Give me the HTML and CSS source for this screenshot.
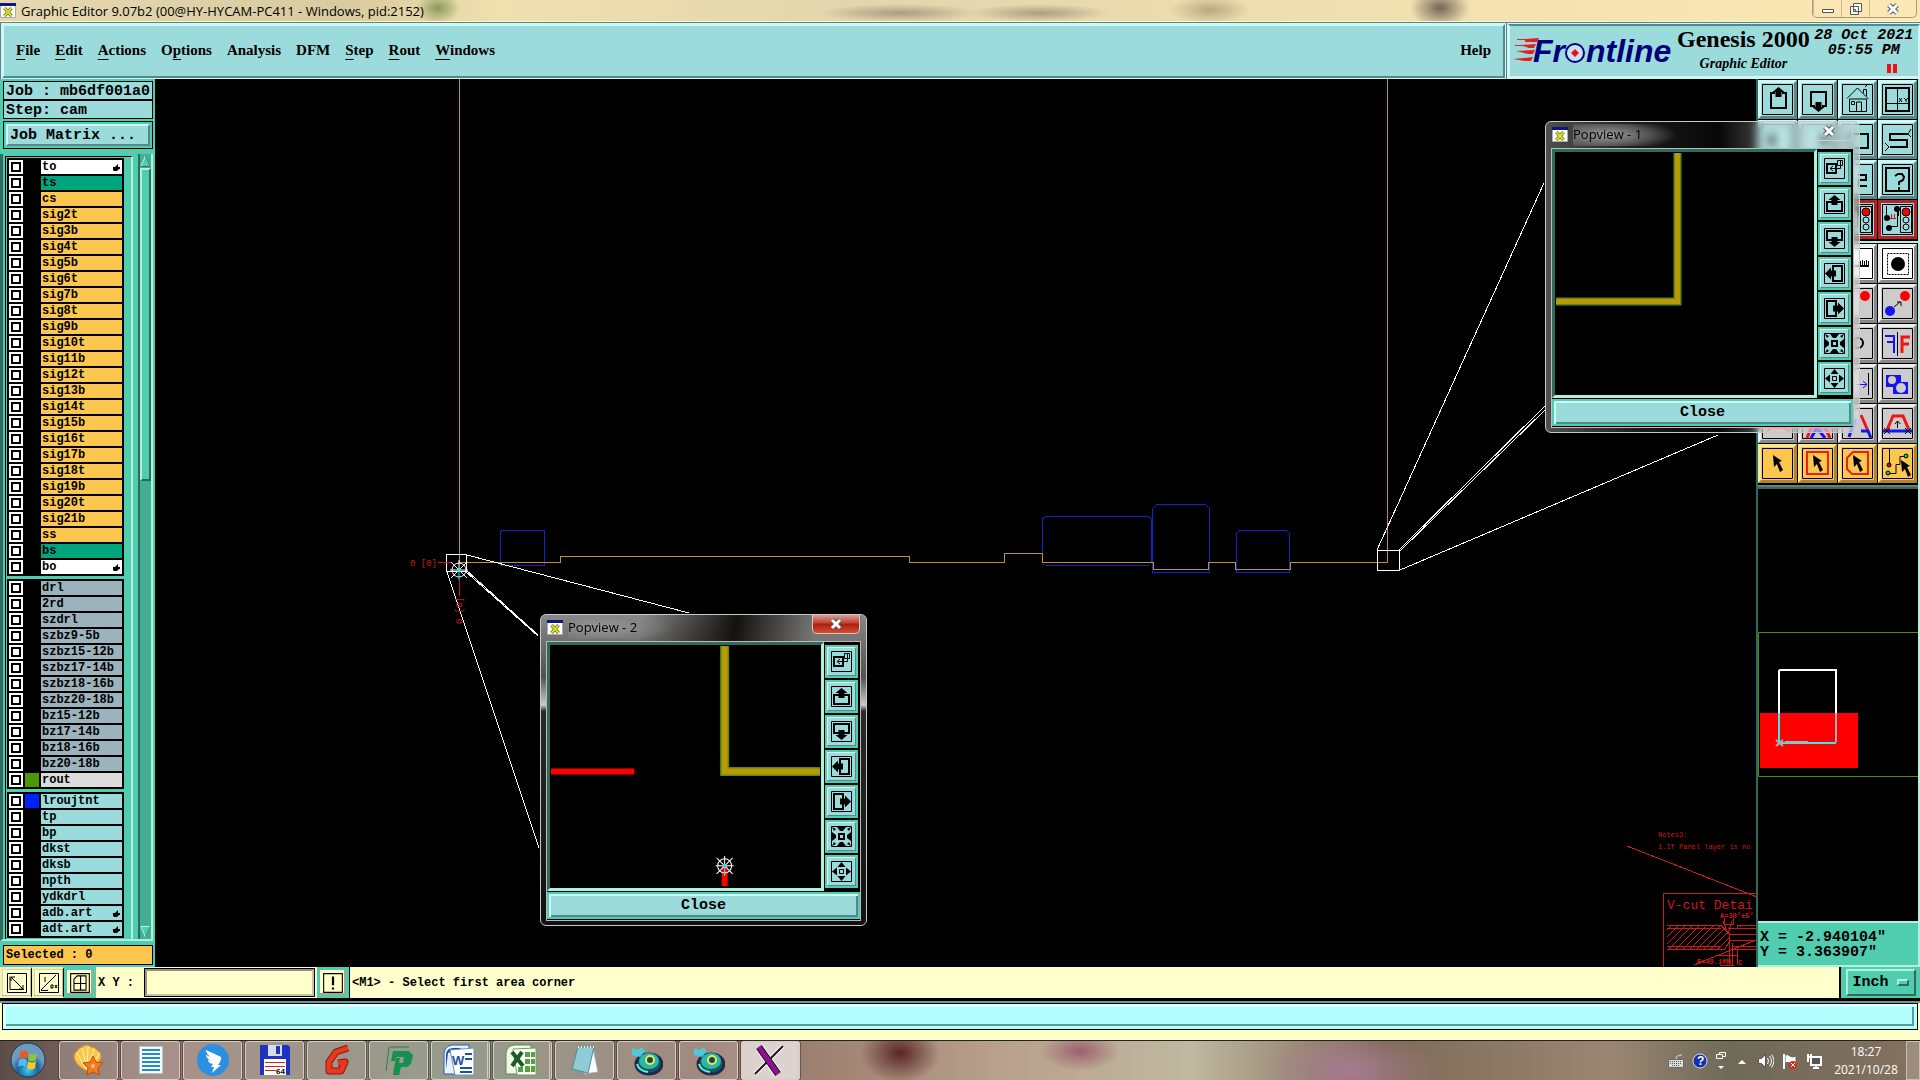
FILE: index.html
```html
<!DOCTYPE html>
<html lang="en">
<head>
<meta charset="utf-8">
<title>Graphic Editor 9.07b2</title>
<link rel="stylesheet" href="styles.css">
</head>
<body>
<svg class="defs" aria-hidden="true">
  <defs>
    <symbol id="xwin" viewBox="0 0 16 16"><path fill="#fff" stroke="#aaa" d="M.5.5h15v14H.5z"/><path fill="#0a1a7a" d="M0 0h16v3H0z"/><path stroke="#3a4a1a" stroke-width="3.400" d="M4.500 5l7 8M11.500 5l-7 8"/><path stroke="#dde02a" stroke-width="2" d="M4.500 5l7 8M11.500 5l-7 8"/></symbol>
    <symbol id="hand" viewBox="0 0 9 9"><path d="M1 4h2l3-3v3h2v2H7L5 8H2L1 7z"/></symbol>
    <symbol id="frame" viewBox="0 0 33 33"><path class="ln" d="M1.500 1.500h30v30h-30z"/></symbol>
    <symbol id="pframe" viewBox="0 0 23 23"><path class="ln" d="M1.500 1.500h20v20h-20z"/></symbol>
    <symbol id="p-pop" viewBox="0 0 23 23"><use href="#pframe"/><path class="ln2" d="M4 7h9v9H4z"/><path class="ln" d="M14.500 3.500h5v5h-5zM17.500 4v7.500h-10M10 9l-3 2.500 3 2.500"/></symbol>
    <symbol id="p-up" viewBox="0 0 23 23"><use href="#pframe"/><path class="ln2" d="M9 10H4v9h15v-9h-5"/><path d="M11.500 3l6 5h-3v5h-6V8h-3z"/></symbol>
    <symbol id="p-down" viewBox="0 0 23 23"><use href="#pframe"/><path class="ln2" d="M9 13H4V4h15v9h-5"/><path d="M11.500 20l6-5h-3v-5h-6v5h-3z"/></symbol>
    <symbol id="p-left" viewBox="0 0 23 23"><use href="#pframe"/><path class="ln2" d="M10 9V4h9v15h-9v-5"/><path d="M2 11.500l6-6v3h5v6H8v3z"/></symbol>
    <symbol id="p-right" viewBox="0 0 23 23"><use href="#pframe"/><path class="ln2" d="M13 9V4H4v15h9v-5"/><path d="M21 11.500l-6-6v3h-5v6h5v3z"/></symbol>
    <symbol id="p-in" viewBox="0 0 23 23"><use href="#pframe"/><path class="ln2" d="M9 9h5v5H9z"/><path d="M7 2h9l-3 4h-3zM7 21h9l-3-4h-3zM2 7v9l4-3v-3zM21 7v9l-4-3v-3zM2 2l4 2-2 2zM21 2l-4 2 2 2zM2 21l4-2-2-2zM21 21l-4-2 2-2z"/></symbol>
    <symbol id="p-out" viewBox="0 0 23 23"><use href="#pframe"/><path class="ln" d="M9.500 9.500h4v4h-4z"/><path d="M11.500 2l4 5h-8zM11.500 21l4-5h-8zM2 11.500l5-4v8zM21 11.500l-5-4v8z"/></symbol>
    <symbol id="traffic" viewBox="0 0 33 33"><use href="#frame"/><path class="ln" d="M17.500 4v9M5.500 3v11M9 23.500h7.500V8"/><circle cx="16" cy="6" r="3"/><circle cx="6" cy="15" r="3"/><circle cx="8" cy="25" r="3"/><path stroke="#e00" fill="none" d="M9 15.500h6M10.500 15v-4M13.500 15v-4"/><path class="ln" d="M19.500 3.500h11v26h-11z"/><circle cx="25" cy="9" r="4" fill="red" stroke="#000"/><circle class="ln" cx="25" cy="17" r="3"/><circle class="ln" cx="25" cy="24" r="3"/></symbol>
    <symbol id="pointer" viewBox="0 0 12 18"><path d="M0 0l9 6-3 1 4 8-3 2-3-8-3 3z"/></symbol>
    <symbol id="star" viewBox="-10 -10 20 20"><g fill="none" stroke="#fff"><circle r="7"/><path d="M-9 0H9M0-10V0M-8-8L8 8M8-8L-8 8"/></g><path stroke="#3ee" d="M0 0v10"/><circle r="2" fill="#3cd8e0"/></symbol>
  </defs>
</svg>

<header class="titlebar">
  <svg class="xwin"><use href="#xwin"/></svg>
  <h1>Graphic Editor 9.07b2 (00@HY-HYCAM-PC411 - Windows, pid:2152)</h1>
  <div class="winctl">
    <button aria-label="Minimize"><svg viewBox="0 0 14 12"><path fill="#fff" stroke="#555" d="M1.500 6.500h11v3h-11z"/></svg></button>
    <button aria-label="Restore"><svg viewBox="0 0 14 12"><path fill="#fff" stroke="#555" d="M4.500.5h8v8h-8zM1.500 3.500h8v8h-8z"/><path fill="none" stroke="#555" d="M4.500 6.500h2v2h-2z"/></svg></button>
    <button class="wide" aria-label="Close"><svg viewBox="0 0 14 12"><path stroke="#555" stroke-width="5" d="M3 2l8 8M11 2l-8 8"/><path stroke="#fff" stroke-width="3" d="M3 2l8 8M11 2l-8 8"/></svg></button>
  </div>
</header>

<div class="head">
  <nav class="menubar">
    <a href="#"><u>F</u>ile</a><a href="#"><u>E</u>dit</a><a href="#"><u>A</u>ctions</a><a href="#">O<u>p</u>tions</a><a href="#">Analysis</a><a href="#">DFM</a><a href="#"><u>S</u>tep</a><a href="#"><u>R</u>out</a><a href="#"><u>W</u>indows</a>
    <a class="help" href="#">Help</a>
  </nav>
  <div class="brand">
    <svg class="logo" viewBox="0 0 164 36">
      <g fill="#e8201c"><path d="M12 6l14-1-2 4H12zM7 12l16-1-2 4h-5zM3 18l19-1-2 4h-5zM0 26l20-2-2 4h-6z"/><path d="M4 6h12v1H4zM2 12h10v1H2z"/></g>
      <text x="20" y="29" class="logo-text">Fr</text><text x="73" y="29" class="logo-text">ntline</text>
      <circle cx="62" cy="20" r="9" fill="#c4e4f4" stroke="#00007c" stroke-width="2"/><path fill="#f01010" d="M62 16l4 4-4 4-4-4z"/>
    </svg>
    <div class="product"><strong>Genesis 2000</strong><em>Graphic Editor</em></div>
    <div class="date"><span>28 Oct 2021</span><span class="time">05:55 PM</span><i class="pause"></i></div>
  </div>
</div>

<main class="main">
  <aside class="sidebar">
    <div class="info"><p>Job : mb6df001a0</p><p>Step: cam</p></div>
    <div class="matrix"><button>Job Matrix ...</button></div>
    <div class="layers">
      <div class="well">
        <div class="group">
          <label><input type="checkbox"><i></i><span class="w">to<svg><use href="#hand"/></svg></span></label>
          <label><input type="checkbox"><i></i><span class="g">ts</span></label>
          <label><input type="checkbox"><i></i><span class="o">cs</span></label>
          <label><input type="checkbox"><i></i><span class="o">sig2t</span></label>
          <label><input type="checkbox"><i></i><span class="o">sig3b</span></label>
          <label><input type="checkbox"><i></i><span class="o">sig4t</span></label>
          <label><input type="checkbox"><i></i><span class="o">sig5b</span></label>
          <label><input type="checkbox"><i></i><span class="o">sig6t</span></label>
          <label><input type="checkbox"><i></i><span class="o">sig7b</span></label>
          <label><input type="checkbox"><i></i><span class="o">sig8t</span></label>
          <label><input type="checkbox"><i></i><span class="o">sig9b</span></label>
          <label><input type="checkbox"><i></i><span class="o">sig10t</span></label>
          <label><input type="checkbox"><i></i><span class="o">sig11b</span></label>
          <label><input type="checkbox"><i></i><span class="o">sig12t</span></label>
          <label><input type="checkbox"><i></i><span class="o">sig13b</span></label>
          <label><input type="checkbox"><i></i><span class="o">sig14t</span></label>
          <label><input type="checkbox"><i></i><span class="o">sig15b</span></label>
          <label><input type="checkbox"><i></i><span class="o">sig16t</span></label>
          <label><input type="checkbox"><i></i><span class="o">sig17b</span></label>
          <label><input type="checkbox"><i></i><span class="o">sig18t</span></label>
          <label><input type="checkbox"><i></i><span class="o">sig19b</span></label>
          <label><input type="checkbox"><i></i><span class="o">sig20t</span></label>
          <label><input type="checkbox"><i></i><span class="o">sig21b</span></label>
          <label><input type="checkbox"><i></i><span class="o">ss</span></label>
          <label><input type="checkbox"><i></i><span class="g">bs</span></label>
          <label><input type="checkbox"><i></i><span class="w">bo<svg><use href="#hand"/></svg></span></label>
        </div>
        <div class="group">
          <label><input type="checkbox"><i></i><span class="d">drl</span></label>
          <label><input type="checkbox"><i></i><span class="d">2rd</span></label>
          <label><input type="checkbox"><i></i><span class="d">szdrl</span></label>
          <label><input type="checkbox"><i></i><span class="d">szbz9-5b</span></label>
          <label><input type="checkbox"><i></i><span class="d">szbz15-12b</span></label>
          <label><input type="checkbox"><i></i><span class="d">szbz17-14b</span></label>
          <label><input type="checkbox"><i></i><span class="d">szbz18-16b</span></label>
          <label><input type="checkbox"><i></i><span class="d">szbz20-18b</span></label>
          <label><input type="checkbox"><i></i><span class="d">bz15-12b</span></label>
          <label><input type="checkbox"><i></i><span class="d">bz17-14b</span></label>
          <label><input type="checkbox"><i></i><span class="d">bz18-16b</span></label>
          <label><input type="checkbox"><i></i><span class="d">bz20-18b</span></label>
          <label><input type="checkbox"><i class="green"></i><span class="r">rout</span></label>
        </div>
        <div class="group">
          <label><input type="checkbox"><i class="blue"></i><span class="c">lroujtnt</span></label>
          <label><input type="checkbox"><i></i><span class="c">tp</span></label>
          <label><input type="checkbox"><i></i><span class="c">bp</span></label>
          <label><input type="checkbox"><i></i><span class="c">dkst</span></label>
          <label><input type="checkbox"><i></i><span class="c">dksb</span></label>
          <label><input type="checkbox"><i></i><span class="c">npth</span></label>
          <label><input type="checkbox"><i></i><span class="c">ydkdrl</span></label>
          <label><input type="checkbox"><i></i><span class="c">adb.art<svg><use href="#hand"/></svg></span></label>
          <label><input type="checkbox"><i></i><span class="c">adt.art<svg><use href="#hand"/></svg></span></label>
        </div>
      </div>
      <div class="scroll">
        <svg class="cap" viewBox="0 0 12 14"><path fill="#50cdae" stroke="#c0f8e4" d="M6 1L1 13h10z"/><path stroke="#2b6a5a" fill="none" d="M6 1l5 12H1"/></svg>
        <div class="thumb"></div><div class="rest"></div>
        <svg class="cap" viewBox="0 0 12 14"><path fill="#50cdae" stroke="#c0f8e4" d="M6 13L1 1h10z"/><path stroke="#2b6a5a" fill="none" d="M6 13l5-12"/></svg>
      </div>
    </div>
    <p class="selected">Selected : 0</p>
  </aside>

  <section class="canvas">
    <svg viewBox="155 79 1601 888" preserveAspectRatio="xMinYMin slice">
      <defs><pattern id="hatch" width="7" height="7" patternUnits="userSpaceOnUse"><path d="M0 7L7 0" stroke="#d01818"/></pattern></defs>
      <g fill="none" shape-rendering="crispEdges">
        <g stroke="#1422c8"><path d="M500.500 565.500v-34l2-1h42v35z"/><rect x="1042.500" y="516.500" width="109" height="49" rx="4"/><path d="M1152.500 572.500v-64l4-4h49l4 4v64zM1236.500 572.500v-39l3-3h47l3 3v39z"/></g>
        <path stroke="#b8933a" d="M459.500 79v483.500h101v-6h349v6h95v-9h38v9h111v7h55v-7h27v7h55v-7h97V79"/>
        <g stroke="#fff"><path d="M446.500 554.500h20v17h-20zM1377.500 550.500h22v20h-22z"/><path d="M467 555l222 58M466 570l72 65M465 571l73 65M447 572l92 276M1377 550l167-367M1399 550l146-144M1400 551l145-141M1400 570l318-135"/></g>
        <path stroke="#d01818" d="M438 562.500h14M459.500 580v16M1627 846l130 51M1757 893.500h-93.500V967"/>
        <g stroke="#d01818"><path fill="url(#hatch)" d="M1667 925.500h54l8 8V942l-4 7h-58M1757 925.500h-20v3h-9M1757 949.500h-25"/><path d="M1667 928.500h54M1667 946.500h54M1732 928.500h25M1729 934.500h28M1729 940.500h28M1732 946.500h25M1723 921l5 13 4-13M1724 918v6h9v-6M1729.500 934v32M1732.500 943v22M1737.500 949v16M1694 965l62-25M1720 965h14M1718 955h20"/></g>
      </g>
      <g class="red tiny"><text x="1658" y="837">Notes3:</text><text x="1658" y="849">1.If Panel layer 1s no</text><text class="strong" x="1720" y="918">A=30°±5°</text><text class="strong" x="1697" y="964">E=49.1MM</text><text class="strong" x="1738" y="965">C</text></g>
      <text class="red detail" x="1667" y="909">V-cut Detai</text>
      <text class="red mark" x="410" y="566">0 [0]</text>
      <text class="red mark" transform="rotate(-90 462 624)" x="462" y="624">0 [0]</text>
      <use href="#star" x="449" y="560" width="20" height="20"/>
    </svg>
  </section>

  <aside class="tools">
    <div class="grid">
      <button aria-label="Zoom up"><svg><use href="#frame"/><path class="ln2" d="M14 10h-4v15h15V10h-4"/><path d="M17.500 4l6 5h-3v5h-6V9h-3z"/></svg></button>
      <button aria-label="Zoom down"><svg><use href="#frame"/><path class="ln2" d="M14 23h-4V9h15v14h-4"/><path d="M17.500 29l6-5h-3v-5h-6v5h-3z"/></svg></button>
      <button aria-label="Home"><svg><use href="#frame"/><path class="ln" d="M6 15.500L16.500 5l11 11M8.500 16v12.500h17V16h-17M22.500 10V6.500h3V13M15.500 28v-9h5v9M10.500 18.500h3v3h-3zM24 4l2-2"/></svg></button>
      <button aria-label="Split view"><svg><use href="#frame"/><path class="ln2" d="M5 5h23v23H5z"/><path class="ln" d="M16.500 5v23M5 20.500h23M18 15l3 4m0-4l-3 4M23 15l2 2 2-2M25 17v2"/></svg></button>
      <button aria-label="Pan left"><svg><use href="#frame"/><path d="M6 17l8-8v16z"/></svg></button>
      <button aria-label="Pan right"><svg><use href="#frame"/><path d="M28 17l-8-8v16z"/></svg></button>
      <button aria-label="Area"><svg><use href="#frame"/><path class="ln2" d="M8 11h19v14H8z"/></svg></button>
      <button aria-label="Serpentine"><svg><use href="#frame"/><path class="ln2" d="M27 11H9v6h17v7H9"/><path class="ln" d="M30 6l-3 5 3 3M4 20l4 4-4 4"/></svg></button>
      <button aria-label="Tool 1"><svg><use href="#frame"/></svg></button>
      <button aria-label="Tool 2"><svg><use href="#frame"/></svg></button>
      <button aria-label="Snap"><svg><use href="#frame"/><path class="ln2" d="M17 12h8v5h-7v6h8"/></svg></button>
      <button aria-label="Query"><svg><use href="#frame"/><path class="ln2" d="M5 5h23v23H5zM14 13l3-2h4l2 3-1 3-4 2v3M18 24v3"/></svg></button>
      <button class="red-btn" aria-label="Control 1"><svg><use href="#traffic"/></svg></button>
      <button class="red-btn" aria-label="Control 2"><svg><use href="#traffic"/></svg></button>
      <button class="red-btn" aria-label="Control 3"><svg><use href="#traffic"/></svg></button>
      <button class="red-btn" aria-label="Control 4"><svg><use href="#traffic"/></svg></button>
    </div>
    <div class="grid gray">
      <button class="white-btn" aria-label="Edit 1"><svg><use href="#frame"/></svg></button>
      <button class="white-btn" aria-label="Edit 2"><svg><use href="#frame"/></svg></button>
      <button class="white-btn" aria-label="Ruler"><svg><use href="#frame"/><path d="M8 20h20v-6h-1v4h-1v-5h-1v5h-1v-4h-1v4h-1v-5h-1v5h-1v-4h-2v4H8z"/></svg></button>
      <button class="white-btn" aria-label="Pad"><svg><use href="#frame"/><path class="ln" stroke-dasharray="2 1" d="M6.500 6.500h21v21h-21z"/><circle cx="17" cy="17" r="7"/></svg></button>
      <button aria-label="Edit 3"><svg><use href="#frame"/></svg></button>
      <button aria-label="Edit 4"><svg><use href="#frame"/></svg></button>
      <button aria-label="Copy"><svg><use href="#frame"/><circle cx="24" cy="9" r="5" fill="red"/></svg></button>
      <button aria-label="Move"><svg><use href="#frame"/><circle cx="24" cy="9" r="5" fill="red"/><circle cx="9" cy="24" r="5" fill="#1414f0"/><path class="ln" d="M13 20l6-5M16 15h4v4"/></svg></button>
      <button aria-label="Edit 5"><svg><use href="#frame"/></svg></button>
      <button aria-label="Edit 6"><svg><use href="#frame"/></svg></button>
      <button aria-label="Rotate"><svg><use href="#frame"/><circle class="ln2" cx="17" cy="16" r="5"/></svg></button>
      <button aria-label="Mirror"><svg><use href="#frame"/><path class="ln" d="M16.500 5v24"/><g fill="none" stroke-width="3"><path stroke="#1414f0" stroke-width="2" d="M4 9h9v17M6 15h7"/><path stroke="#f01414" d="M29 10h-8v16M28 17h-7"/></g></svg></button>
      <button aria-label="Edit 7"><svg><use href="#frame"/></svg></button>
      <button aria-label="Edit 8"><svg><use href="#frame"/></svg></button>
      <button aria-label="Spread"><svg><use href="#frame"/><path class="ln" d="M27.500 6v22"/><path fill="none" stroke="#1414f0" d="M15 17.500h11M22 14l4 3.500-4 3.500"/></svg></button>
      <button aria-label="Surfaces"><svg><use href="#frame"/><path fill="#1414f0" d="M5 8h15v7h7v12H12v-7H5z"/><circle cx="11" cy="13" r="4" fill="#ccc"/><circle cx="20" cy="21" r="5" fill="#ccc"/></svg></button>
      <button aria-label="Line 1"><svg><use href="#frame"/><path fill="none" stroke="#f01414" stroke-width="2" d="M6 24l5-3h12l5 3"/></svg></button>
      <button aria-label="Line 2"><svg><use href="#frame"/><g fill="none" stroke-width="3"><path stroke="#f01414" d="M6 31l7-17h8l8 17"/><path stroke="#1414f0" d="M10 31l6-10 8 10"/></g></svg></button>
      <button aria-label="Line 3"><svg><use href="#frame"/><g fill="none" stroke-width="3"><path stroke="#f01414" d="M20 8l7 16"/><path stroke="#1414f0" d="M8 30l6-18M20 24h7l3 7"/></g></svg></button>
      <button aria-label="Line 4"><svg><use href="#frame"/><path fill="none" stroke="#f01414" stroke-width="3" d="M6 23l6-14h10l6 14"/><path stroke="#1414f0" stroke-width="3" d="M2 24h29"/><path class="ln" d="M16.500 21v-7M14 17l2.500-3 3 3M3 21l6 6M9 21l-6 6M24 21l6 6M30 21l-6 6"/></svg></button>
      <button class="gold-btn" aria-label="Select"><svg><use href="#frame"/><use href="#pointer" x="12" y="8" width="12" height="18"/></svg></button>
      <button class="gold-btn" aria-label="Select rectangle"><svg><use href="#frame"/><path fill="none" stroke="#f02010" stroke-width="2" d="M6 5h21v22H6z"/><use href="#pointer" x="12" y="8" width="12" height="18"/></svg></button>
      <button class="gold-btn" aria-label="Select polygon"><svg><use href="#frame"/><path fill="none" stroke="#f02010" stroke-width="2" d="M12 5h15v22H11l-5-5V11z"/><use href="#pointer" x="12" y="8" width="12" height="18"/></svg></button>
      <button class="gold-btn" aria-label="Select net"><svg><use href="#frame"/><path class="ln" d="M8.500 2v17M6 26.500h9v-9h4v-8h6"/><g stroke="#000"><circle cx="8" cy="18" r="2" fill="#c01010"/><circle cx="25" cy="9" r="2" fill="#20d020"/><circle cx="7" cy="26" r="2" fill="#20d020"/></g><use href="#pointer" x="20" y="13" width="12" height="18"/></svg></button>
    </div>
    <div class="overview">
      <svg viewBox="1758 489 160 432" preserveAspectRatio="xMinYMin slice"><path fill="none" stroke="#4a8a20" d="M1920 632.500h-161.500v144H1920"/><path fill="red" d="M1760 713h98v55h-98z"/><path fill="none" stroke="#fff" stroke-width="2" d="M1779 713v-42l1-1h56v43"/><path fill="none" stroke="#3ee" stroke-width="2" d="M1779 713v30h57"/><path fill="none" stroke="#b0b0b0" stroke-width="2" d="M1836 713v29M1785 742h23M1776 740l7 6M1783 740l-7 6"/></svg>
    </div>
    <pre class="coords">X = -2.940104"
Y = 3.363907"</pre>
  </aside>
</main>

<div class="status">
  <button aria-label="Measure"><svg viewBox="0 0 22 22"><path class="ln" d="M1.500 1.500h19v19h-19zM4 4.500V17.500h14M5 5l12 12M5 9V5h4M17 13v4h-4"/></svg></button>
  <button aria-label="Angle"><svg viewBox="0 0 22 22"><path class="ln" d="M1.500 1.500h19v19h-19zM3 18.500h7M3 18L18 3M7 5v5M13 13h2v3h-2zM17 13l2 3M19 13l-2 3"/></svg></button>
  <button class="teal" aria-label="Grid"><svg viewBox="0 0 18 20"><path class="ln" d="M.5 1.500h17v17H.5zM3.500 16.500v-10l3-3h8v13zM9.500 3v13M3 10.500h12"/></svg></button>
  <label class="xy" for="xy">X Y :</label>
  <input id="xy" type="text">
  <button class="teal" aria-label="Alert"><svg viewBox="0 0 18 20"><path class="ln" d="M.5 1.500h17v17H.5z"/><path class="ln2" d="M9 4v8M9 14v2"/></svg></button>
  <output>&lt;M1&gt; - Select first area corner</output>
  <div class="unit"><button>Inch <i></i></button></div>
</div>
<div class="progress"><div></div></div>

<footer class="taskbar">
  <button class="orb" aria-label="Start"><svg viewBox="0 0 36 36"><defs><radialGradient id="orb" cy=".8"><stop offset="0" stop-color="#3fd0f0"/><stop offset=".6" stop-color="#1c5f9c"/><stop offset="1" stop-color="#6a9cc0"/></radialGradient></defs><circle cx="18" cy="18" r="17" fill="url(#orb)" stroke="#24384c"/><path fill="#e85a28" d="M10 10q4-3 8 0l-1 7q-4-3-8 0z"/><path fill="#8cc63c" d="M19 11q4 3 8 0l-1 7q-4 3-8 0z"/><path fill="#58b8f0" d="M9 18q4-3 8 0l-1 7q-4-3-8 0z"/><path fill="#fcc828" d="M18 19q4 3 8 0l-1 7q-4 3-8 0z"/></svg></button>
  <button aria-label="Shell"><svg viewBox="0 0 32 32"><path fill="#f8c84c" stroke="#e08a20" d="M14 27Q0 20 1 11q1-3 3-4 2-4 5-4 5-4 9 0 4 0 6 3 5 3 4 8l-6 10z"/><path stroke="#fff3b8" fill="none" d="M13 25L4 9M14 25L9 4M14 25l1-22M15 24l6-19M16 24L27 9"/><path fill="#f47a20" stroke="#b84c10" d="M20 12l3 6 7 1-5 5 1 7-6-3-6 3 1-7-5-5 7-1z"/><circle cx="20" cy="22" r="2" fill="#fbc070"/></svg></button>
  <button aria-label="Notes"><svg viewBox="0 0 32 32"><path fill="#f4fbff" stroke="#a8c8d8" d="M4.500 2.500h23v27h-23z"/><path stroke="#2888c8" stroke-width="2" d="M7 6h18M7 10h18M7 14h18M7 18h18M7 22h18M7 26h18"/></svg></button>
  <button aria-label="DingTalk"><svg viewBox="0 0 32 32"><circle cx="16" cy="16" r="16" fill="#2c90e0"/><path fill="#fff" d="M9 6l15 7q1 2-1 5l-2 3h3l-9 8 2-6h-3l2-3q-5-1-5-4l3 1q-5-3-5-6l5 2q-5-3-5-7z"/></svg></button>
  <button aria-label="Save"><svg viewBox="0 0 32 32"><path fill="#1c34c0" d="M1 1h28l2 2v28H1z"/><path fill="#d8dce4" d="M9 1h14v11H9z"/><path fill="#1c34c0" d="M17 2h4v8h-4z"/><path fill="#fff" d="M5 15h22v16H5z"/><path stroke="#d02020" d="M6 18.500h20M6 22.500h20M6 26.500h11"/><text class="icon-text" x="17" y="30">64</text></svg></button>
  <button aria-label="G app"><svg viewBox="0 0 32 32"><path fill="none" stroke="#8c1410" stroke-width="7" stroke-linejoin="round" d="M27 4l-12 4-7 10v9h12l4-9-7 1"/><path fill="none" stroke="#e83820" stroke-width="5" stroke-linejoin="round" d="M27 4l-12 4-7 10v9h12l4-9-7 1"/></svg></button>
  <button aria-label="P app"><svg viewBox="0 0 32 32"><path fill="none" stroke="#18884c" d="M7 3h19M6 3L3 27"/><path fill="#149050" d="M10 7h16l4 4-2 9-4 3h-6l-2 8h-6l1-7 2-10h4l-1 5h4l1-6h-8l-1 4H8z"/></svg></button>
  <button class="stack" aria-label="Word"><svg viewBox="0 0 32 32"><path fill="#e8f0fc" stroke="#2c5cac" d="M1 30V9q1-7 8-8h17v29z"/><path fill="#1c50a4" d="M3 25V10q1-6 7-6h9L5 9z"/><path fill="#fff" stroke="#7090c0" d="M7 6l24-2v27H12z"/><text class="icon-text word" x="9" y="21">W</text><path stroke="#1c50a4" stroke-width="2" d="M22 10h7M22 15h7M17 24h12M17 28h12"/></svg></button>
  <button class="stack" aria-label="Excel"><svg viewBox="0 0 32 32"><path fill="#f0f8e8" stroke="#4c9838" d="M1 30V9q1-7 8-8h17v29z"/><path fill="#fff" stroke="#70a060" d="M8 5l23-1v27H12z"/><g fill="#58a040"><path d="M20 8h5v5h-5zM26 8h4v5h-4zM20 15h5v5h-5zM26 15h4v5h-4zM13 23h5v5h-5zM20 22h5v6h-5zM26 22h4v6h-4z"/></g><path stroke="#1c5c20" stroke-width="4" d="M7 8l11 14M17 8L7 22"/></svg></button>
  <button aria-label="Notepad"><svg viewBox="0 0 32 32"><path fill="#fff" stroke="#aab" d="M24 4l5 24-14 2z"/><path fill="#90ccd8" stroke="#508a9c" d="M9 3h16l-6 26L3 25z"/><path stroke="#fff" stroke-dasharray="1 2" stroke-width="2" d="M9 3h16"/></svg></button>
  <button aria-label="Genesis 1"><svg viewBox="0 0 32 32"><ellipse cx="18" cy="20" rx="13" ry="10" fill="#185858" stroke="#202850" stroke-width="3"/><ellipse cx="18" cy="17" rx="10" ry="8" fill="#28b8a8"/><circle cx="19" cy="16" r="4" fill="#104858" stroke="#f0e850" stroke-width="2"/><path fill="#50c8d8" d="M1 4l6 2 3-3 4 4-5 6-8-2z"/><path stroke="#60f0d0" stroke-width="2" fill="none" d="M6 20q2 7 11 8"/></svg></button>
  <button aria-label="Genesis 2"><svg viewBox="0 0 32 32"><ellipse cx="18" cy="20" rx="13" ry="10" fill="#185858" stroke="#202850" stroke-width="3"/><ellipse cx="18" cy="17" rx="10" ry="8" fill="#28b8a8"/><circle cx="19" cy="16" r="4" fill="#104858" stroke="#f0e850" stroke-width="2"/><path fill="#50c8d8" d="M1 4l6 2 3-3 4 4-5 6-8-2z"/><path stroke="#60f0d0" stroke-width="2" fill="none" d="M6 20q2 7 11 8"/></svg></button>
  <button class="active stack" aria-label="X server"><svg viewBox="0 0 32 32"><path stroke="#fff" stroke-width="9" d="M6 3l19 27"/><path stroke="#fff" stroke-width="4" d="M30 2L2 30"/><path stroke="#201020" stroke-width="7" d="M6 3l19 27"/><path stroke="#201020" stroke-width="2" d="M30 2L2 30"/><path stroke="#901090" stroke-width="5" d="M6 3l19 27"/></svg></button>
  <div class="tray">
    <svg viewBox="0 0 16 16"><path fill="none" stroke="#ddd" d="M8 6q0-4 6-4"/><path fill="#ddd" stroke="#666" d="M.5 6.500h15v8H.5z"/><path stroke="#555" stroke-dasharray="1 1" d="M2 8.500h12M2 10.500h12M4 12.500h8"/></svg>
    <svg viewBox="0 0 16 16"><circle cx="8" cy="8" r="7" fill="#1430b0" stroke="#dde"/><text class="icon-text help-mark" x="5" y="12">?</text></svg>
    <svg class="lang" viewBox="0 0 10 20"><path fill="none" stroke="#fff" d="M3.500 3.500v-2h6v4h-3M.5 3.500h6v4h-6z"/><path fill="#fff" d="M2 15h6l-3 3z"/></svg>
    <svg viewBox="0 0 16 16"><path fill="#fff" d="M4 11l4-4 4 4z"/></svg>
    <svg viewBox="0 0 16 16"><path fill="#fff" stroke="#555" d="M.5 5.500h3l4-4v13l-4-4h-3z"/><path fill="none" stroke="#fff" d="M9.500 5q2 3 0 6M11.500 3q4 5 0 10M13.500 1.500q5 6 0 13"/></svg>
    <svg viewBox="0 0 16 16"><path fill="#fff" stroke="#666" d="M3 2q3-1 5 1t6 0v7q-4 1-6 0t-5 0z"/><path stroke="#fff" stroke-width="2" d="M2 1v15"/><circle cx="11" cy="12" r="4" fill="#e02820"/><path stroke="#fff" d="M9 10l4 4M13 10l-4 4"/></svg>
    <svg viewBox="0 0 16 16"><path fill="#555" stroke="#fff" stroke-width="2" d="M5 4h10v8H5z"/><path stroke="#fff" stroke-width="2" d="M10 12v3M7 15h6M2 1v8M5 1v3M1 4h5"/></svg>
    <time><span>18:27</span><span>2021/10/28</span></time>
    <button class="desk" aria-label="Show desktop"></button>
  </div>
</footer>

<section class="popup one">
  <header><svg class="xwin"><use href="#xwin"/></svg><h2>Popview - 1</h2>
    <button class="x" aria-label="Close window"><svg viewBox="0 0 14 12"><path stroke="#555" stroke-width="5" d="M3 2l8 8M11 2l-8 8"/><path stroke="#fff" stroke-width="3" d="M3 2l8 8M11 2l-8 8"/></svg></button></header>
  <div class="client">
    <div class="view"><svg viewBox="0 0 258 242"><path fill="none" stroke="#5a8a10" stroke-width="8" d="M1 149h121V1"/><path fill="none" stroke="#b89a08" stroke-width="5" d="M1 149h121V1"/></svg></div>
    <div class="side"><button aria-label="Pop"><svg><use href="#p-pop"/></svg></button><button aria-label="Up"><svg><use href="#p-up"/></svg></button><button aria-label="Down"><svg><use href="#p-down"/></svg></button><button aria-label="Left"><svg><use href="#p-left"/></svg></button><button aria-label="Right"><svg><use href="#p-right"/></svg></button><button aria-label="Zoom in"><svg><use href="#p-in"/></svg></button><button aria-label="Zoom out"><svg><use href="#p-out"/></svg></button></div>
    <button class="close">Close</button>
  </div>
</section>

<section class="popup two">
  <header><svg class="xwin"><use href="#xwin"/></svg><h2>Popview - 2</h2>
    <button class="x hot" aria-label="Close window"><svg viewBox="0 0 14 12"><path stroke="#555" stroke-width="5" d="M3 2l8 8M11 2l-8 8"/><path stroke="#fff" stroke-width="3" d="M3 2l8 8M11 2l-8 8"/></svg></button></header>
  <div class="client">
    <div class="view"><svg viewBox="0 0 270 242"><path fill="none" stroke="#5a8a10" stroke-width="9" d="M174 1v125h95"/><path fill="none" stroke="#b89a08" stroke-width="6" d="M174 1v125h95"/><path stroke="red" stroke-width="6" d="M1 126h83M174 220v20"/><use href="#star" x="164" y="210" width="20" height="20"/></svg></div>
    <div class="side"><button aria-label="Pop"><svg><use href="#p-pop"/></svg></button><button aria-label="Up"><svg><use href="#p-up"/></svg></button><button aria-label="Down"><svg><use href="#p-down"/></svg></button><button aria-label="Left"><svg><use href="#p-left"/></svg></button><button aria-label="Right"><svg><use href="#p-right"/></svg></button><button aria-label="Zoom in"><svg><use href="#p-in"/></svg></button><button aria-label="Zoom out"><svg><use href="#p-out"/></svg></button></div>
    <button class="close">Close</button>
  </div>
</section>
</body>
</html>
```
FILE: styles.css
```css
:root {
  --teal: #50cdae;
  --teal-light: #b0f0dc;
  --teal-dark: #2f6b5c;
  --cyan: #9cdbdb;
  --cyan-light: #d0f6f6;
  --cyan-dark: #57878a;
  --cream: #ffffcc;
  --gold: #fdc64e;
  --mono: "Liberation Mono", monospace;
  --serif: "Liberation Serif", serif;
  --ui: "Open Sans", "Noto Sans", sans-serif;
}
* { box-sizing: border-box; }
body {
  margin: 0;
  min-height: 100vh;
  display: flex;
  flex-direction: column;
  position: relative;
  background: #000;
  font: bold 15px/18px var(--mono);
  color: #000;
  overflow: hidden;
}
button { margin: 0; padding: 0; font: inherit; color: inherit; border: 0; background: none; }
p, h1, h2, pre { margin: 0; font: inherit; }
svg { display: block; }
.defs { position: absolute; width: 0; height: 0; }
.ln { fill: none; stroke: #000; }
.ln2 { fill: none; stroke: #000; stroke-width: 2; }
.xwin { width: 16px; height: 16px; }

/* Title bar */
.titlebar {
  height: 22px;
  display: flex;
  align-items: center;
  gap: 5px;
  background:
    radial-gradient(ellipse 22px 16px at 438px 8px, #8a9a58, transparent),
    radial-gradient(ellipse 80px 9px at 900px 13px, #8c8068aa, transparent),
    radial-gradient(ellipse 70px 9px at 1040px 13px, #8c8068aa, transparent),
    radial-gradient(ellipse 30px 20px at 1440px 8px, #75655a, transparent),
    radial-gradient(ellipse 40px 14px at 1210px 10px, #9c9068aa, transparent),
    linear-gradient(90deg, #e6d8b0, #d9cba0 18%, #f0e0b0 26%, #e2d6ae 45%, #f0dfb0 70%, #fbe8b4);
  border-bottom: 1px solid #fff3cc;
}
.titlebar h1 { font: 13px/20px var(--ui); flex: 1; }
.winctl { display: flex; align-self: flex-start; margin-right: 3px; border: 1px solid #a89c7c; border-top: 0; border-radius: 0 0 5px 5px; }
.winctl button { width: 28px; height: 17px; display: grid; place-items: center; border-left: 1px solid #c8bc94; }
.winctl .wide { width: 47px; }
.winctl svg, .x svg { width: 14px; height: 12px; }

/* Menu and brand */
.head { display: flex; height: 57px; background: var(--cyan-dark); }
.menubar, .brand {
  display: flex;
  align-items: center;
  background: var(--cyan);
  border: 2px solid;
  border-color: var(--cyan-light) var(--cyan-dark) var(--cyan-dark) var(--cyan-light);
  outline: 1px solid var(--cyan-light);
}
.menubar { flex: 1; margin: 2px 2px 1px 2px; padding: 0 12px 3px; gap: 15px; font: bold 15px/18px var(--serif); }
.menubar a { color: #000; text-decoration: none; }
.menubar u { text-underline-offset: 4px; text-decoration-thickness: 1px; }
.menubar .help { margin-left: auto; }
.brand { width: 412px; margin: 2px 0 1px 1px; border-color: var(--cyan-dark) var(--cyan-light) var(--cyan-light) var(--cyan-light); padding-left: 3px; }
.logo { width: 164px; height: 36px; }
.product { display: grid; justify-items: center; font-family: var(--serif); padding-bottom: 2px; }
.logo-text { font: italic bold 32px "Liberation Sans", sans-serif; fill: #00007c; }
.product strong { font-size: 24px; line-height: 28px; }
.product em { font-size: 14px; line-height: 22px; }
.date { display: grid; flex: 1; justify-items: center; font: italic bold 15px/15px var(--mono); padding-top: 2px; }
.pause { width: 10px; height: 9px; margin: 6px 21px 4px 0; justify-self: end; border: solid #f01010; border-width: 0 4px; }

/* Main */
.main { flex: 1; display: flex; min-height: 888px; }
.sidebar { width: 155px; padding: 2px 2px 2px 3px; background: var(--teal); display: flex; flex-direction: column; }
.info p { border: 1px solid #000; background: var(--cyan); height: 19px; line-height: 19px; padding-left: 2px; white-space: nowrap; }
.matrix { border: 1px solid #000; margin: 2px 0 5px; padding: 2px; }
.matrix button { width: 100%; height: 22px; text-align: left; padding: 1px 0 0 2px; background: var(--cyan); border: 2px solid; border-color: var(--cyan-light) var(--cyan-dark) var(--cyan-dark) var(--cyan-light); }
.layers { flex: 1; display: flex; justify-content: space-between; margin-left: -3px; padding: 2px 0 0 2px; border-left: 3px solid var(--teal-dark); border-bottom: 2px solid var(--teal-light); }
.well { display: grid; align-content: start; gap: 3px; width: 128px; padding: 1px 4px 0 1px; border-left: 1px solid #000; border-top: 1px solid #000; border-right: 2px solid var(--teal-light); }
.group { display: grid; gap: 2px; padding: 2px; background: #000; width: 117px; }
.group label { display: flex; gap: 2px; height: 14px; font-size: 12px; line-height: 14px; }
.group input { appearance: none; margin: 0; width: 14px; height: 14px; background: #fff; border: 2px solid #fff; box-shadow: inset 0 0 0 2px #000; }
.group i { width: 14px; }
.group span { flex: 1; padding-left: 1px; display: flex; justify-content: space-between; align-items: center; white-space: nowrap; }
.group svg { width: 9px; height: 9px; margin-right: 1px; }
.w { background: #fff; } .g { background: #00a57e; } .o { background: var(--gold); }
.d { background: #9ab3bc; } .r { background: #dcdcdc; } .c { background: var(--cyan); }
.green { background: #4a9a00; } .blue { background: #0020ff; }
.scroll { width: 15px; display: flex; flex-direction: column; background: #42af95; border-left: 2px solid var(--teal-dark); border-right: 2px solid var(--teal-light); margin-top: -2px; }
.cap { width: 11px; height: 14px; }
.thumb { flex: 41; background: var(--teal); border: 2px solid; border-color: var(--teal-light) var(--teal-dark) var(--teal-dark) var(--teal-light); }
.rest { flex: 59; }
.selected { margin-top: 4px; height: 20px; padding-left: 2px; border: 1px solid #000; background: var(--gold); font-size: 12px; line-height: 18px; }

.canvas { flex: 1; min-width: 0; }
.canvas > svg { width: 100%; height: 100%; }
.red { fill: #d01818; }
.tiny { font: 7px var(--mono); }
.strong { font-weight: bold; }
.detail { font: 13px var(--mono); }
.mark { font: 9px var(--mono); }

/* Tool palette */
.tools { width: 164px; display: flex; flex-direction: column; background: #000; border-left: 2px solid var(--teal-dark); border-right: 2px solid var(--teal-light); }
.grid { display: grid; grid-template-columns: repeat(4, 39px); gap: 1px; padding: 1px 0 2px; border-bottom: 2px solid var(--teal-light); }
.grid.gray { border-bottom-color: #777; padding-top: 1px; }
.grid button { width: 39px; height: 39px; background: var(--cyan); border: 3px solid; border-color: var(--cyan-light) var(--cyan-dark) var(--cyan-dark) var(--cyan-light); }
.grid svg { width: 33px; height: 33px; }
.grid .red-btn { border-color: #b82028; }
.grid.gray button { background: #ccc; border-color: #eee #888 #888 #eee; }
.grid.gray .white-btn { background: #fff; }
.grid.gray .gold-btn { background: var(--gold); border-color: #ffe49c #b08428 #b08428 #ffe49c; }
.overview { flex: 1; border-top: 2px solid var(--teal-dark); border-bottom: 2px solid var(--teal-light); overflow: hidden; min-height: 0; }
.overview svg { width: 100%; height: 432px; }
.coords { height: 44px; padding: 7px 2px 5px; background: var(--teal); line-height: 15px; border-bottom: 2px solid var(--teal-light); }

/* Status row */
.status { display: flex; height: 32px; background: var(--cream); font-size: 12px; border-bottom: 1px solid #000; }
.status > button { width: 32px; display: grid; place-items: center; border: 2px solid #f4f0b8; border-right: 1px solid #000; box-shadow: inset -1px -1px #bdb99a, inset 1px 1px #d8d4b0; }
.status > .teal { border: 3px solid var(--teal); box-shadow: inset -2px -2px #aaa68a; }
.status > button svg { width: 22px; height: 22px; }
.xy { padding: 0 8px 0 2px; line-height: 32px; }
.status input { width: 169px; background: var(--cream); border: 2px solid; border-color: #98947a #c8c4a0 #c8c4a0 #98947a; outline: 1px solid #000; margin: 2px 3px 2px 3px; padding: 0 3px; font: inherit; }
.status output { flex: 1; padding-left: 2px; line-height: 32px; border-left: 1px solid #000; }
.unit { width: 81px; padding: 2px 4px 2px 5px; background: var(--teal); border-left: 2px solid #000; font-size: 15px; }
.unit button { width: 100%; height: 27px; display: flex; align-items: center; justify-content: space-around; border: 2px solid; border-color: var(--teal-light) var(--teal-dark) var(--teal-dark) var(--teal-light); }
.unit i { width: 12px; height: 7px; border: 2px solid; border-color: var(--teal-light) var(--teal-dark) var(--teal-dark) var(--teal-light); }
.progress { height: 41px; padding: 2px 2px 10px; background: var(--cream); border-top: 2px solid #000; box-shadow: inset 0 2px #6f9a9a; }
.progress div { height: 27px; background: #b2ffff; border: 1px solid #000; box-shadow: inset 3px 3px #dcffff, inset -3px -3px #b2ffff, inset -5px -5px #5c9a9a; }

/* Taskbar */
.taskbar {
  height: 40px;
  display: flex;
  gap: 3px;
  border-top: 1px solid #222;
  background:
    radial-gradient(ellipse 40px 30px at 900px 12px, #5a2626, transparent),
    radial-gradient(ellipse 40px 20px at 1080px 10px, #9c6070, transparent),
    radial-gradient(ellipse 90px 40px at 1350px 30px, #a87a90, transparent),
    linear-gradient(90deg, #5c4c48, #94746c 8%, #7c8470 24%, #8a6c60 36%, #b8a08c 52%, #c0b8a0 62%, #7d6a58 72%, #9a8672 84%, #6f6a58 90%, #85705f);
}
.taskbar > button { width: 59px; display: grid; place-items: center; border: 1px solid #d8ccc4; border-radius: 3px; background: #ffffff33; box-shadow: 0 0 0 1px #3338; padding-bottom: 2px; }
.taskbar > button svg { width: 32px; height: 32px; }
.taskbar > .orb { width: 56px; border: 0; background: none; box-shadow: none; }
.taskbar > .orb svg { width: 36px; height: 36px; }
.taskbar > .stack { border-right: 3px double #d8ccc4; padding-right: 2px; }
.taskbar > .active { background: #ffffffaa; }
.icon-text { font: bold 8px "Liberation Sans", sans-serif; }
.icon-text.word { font-size: 13px; fill: #1c50a4; }
.icon-text.help-mark { font-size: 12px; fill: #fff; }
.tray { margin-left: auto; display: flex; align-items: center; gap: 8px; color: #fff; }
.tray svg { width: 16px; height: 16px; }
.tray .lang { width: 10px; height: 20px; }
.tray time { display: grid; justify-items: center; margin: 0 0 0 2px; width: 68px; font: 12px/18px var(--ui); }
.desk { width: 14px; height: 39px; border: 1px solid #c8c0b0; background: #fff3; margin-left: -2px; }

/* Pop-up windows */
.popup { position: absolute; display: flex; flex-direction: column; padding: 0 5px 4px; border: 1px solid #c8c8c8; border-radius: 6px; backdrop-filter: blur(4px); }
.popup.one { top: 121px; right: 60px; width: 315px; height: 312px; background: linear-gradient(90deg, #777a, #3338 30%, #1116 55%, #fff4 70%, #fff5); }
.popup.two { top: 614px; left: 540px; width: 327px; height: 312px; background: linear-gradient(#888 0, #777 6%, #666c 20%, #ccc 29%, #2a2a2a 31%, #111); }
.popup.two header { background: linear-gradient(100deg, transparent 30%, #14120e 60%, #777 85%); }
.popup header { display: flex; gap: 5px; height: 26px; flex: none; align-items: center; padding: 0 1px; }
.popup h2 { flex: 1; font: 13px/20px var(--ui); padding-bottom: 2px; background: radial-gradient(ellipse 70px 16px at 34px 11px, #999, #8888 60%, transparent); }
.x { width: 48px; height: 19px; align-self: flex-start; display: grid; place-items: center; border: 1px solid #c8d4cc; border-top: 0; border-radius: 0 0 5px 5px; }
.x.hot { background: linear-gradient(#d8a09a, #c04030 45%, #a82010 50%, #d05030); border-color: #e8c0b8; }
.client { flex: 1; display: grid; grid-template-columns: 1fr 35px; grid-template-rows: 249px 29px; gap: 0 1px; background: #000; border: 1px solid #bbb; }
.view { border: 3px solid; border-color: var(--teal-dark) var(--teal-light) var(--teal-light) var(--teal-dark); overflow: hidden; }
.view svg { width: 100%; height: 243px; }
.side { display: grid; grid-auto-rows: 33px; gap: 2px; padding: 3px 0 0; }
.side button { width: 33px; height: 33px; background: var(--cyan); border: 3px solid; border-color: var(--cyan-light) var(--cyan-dark) var(--cyan-dark) var(--cyan-light); outline: 2px solid var(--teal); outline-offset: -2px; padding: 2px; }
.side svg { width: 23px; height: 23px; }
.close { grid-column: 1 / -1; margin: 1px 0; background: var(--cyan); border: 2px solid var(--teal); box-shadow: inset 2px 2px var(--cyan-light), inset -2px -2px var(--cyan-dark); }
```
